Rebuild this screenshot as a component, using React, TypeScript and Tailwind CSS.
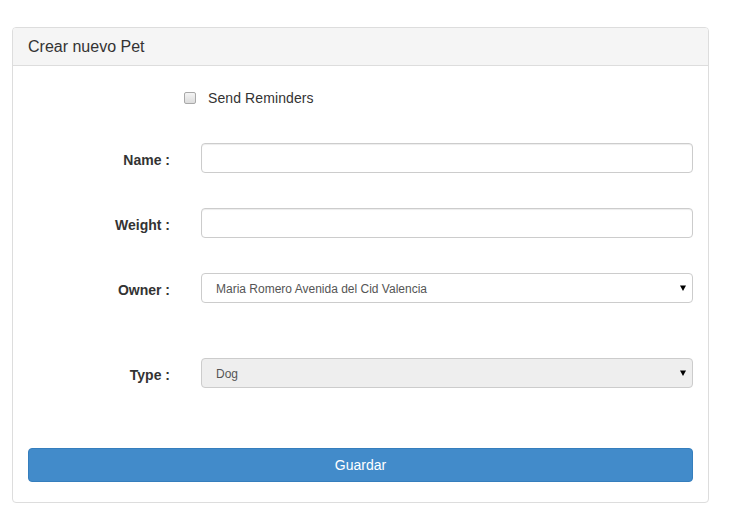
import React from 'react';

const font = { fontFamily: '"Liberation Sans", Arial, sans-serif' };

const Arrow = () => (
  <svg width="8" height="8" viewBox="0 0 8 8" className="absolute right-[6px] top-1/2 -translate-y-1/2 pointer-events-none">
    <path d="M1 1.5 L7 1.5 L4 7 Z" fill="#000" />
  </svg>
);

const Row = ({ label, children, className }: any) => (
  <div className={`flex items-center ${className}`}>
    <label className="w-[173px] pr-[31px] pt-[4px] text-right text-[14px] font-bold text-[#333]">{label}</label>
    <div className="flex-1">{children}</div>
  </div>
);

const App = () => {
  return (
    <div className="min-h-screen w-full bg-white pt-[27px] pl-[12px]" style={font}>
      <div className="w-[697px] border border-[#ddd] rounded-[4px] bg-white">
        {/* header */}
        <div className="h-[38px] bg-[#f5f5f5] border-b border-[#ddd] rounded-t-[3px] flex items-center px-[15px]">
          <h3 className="text-[16px] text-[#333]">Crear nuevo Pet</h3>
        </div>

        {/* body */}
        <div className="px-[15px] pt-[25px] pb-[20px]">
          <div className="flex items-center h-[14px] pl-[156px]">
            <span className="w-[12px] h-[12px] rounded-[2px] border border-[#a9a9a9] bg-gradient-to-b from-[#f4f4f4] to-[#dcdcdc]"></span>
            <span className="ml-[12px] text-[14px] tracking-[0.1px] text-[#333]">Send Reminders</span>
          </div>

          <Row label="Name :" className="mt-[38px]">
            <input type="text" className="w-full h-[30px] border border-[#ccc] rounded-[4px] bg-white shadow-[inset_0_1px_1px_rgba(0,0,0,0.075)] outline-none" />
          </Row>

          <Row label="Weight :" className="mt-[35px]">
            <input type="text" className="w-full h-[30px] border border-[#ccc] rounded-[4px] bg-white shadow-[inset_0_1px_1px_rgba(0,0,0,0.075)] outline-none" />
          </Row>

          <Row label="Owner :" className="mt-[35px]">
            <div className="relative">
              <select className="appearance-none w-full h-[30px] border border-[#ccc] rounded-[4px] bg-white pl-[14px] pt-[1px] text-[12px] text-[#555] outline-none" style={font}>
                <option>Maria Romero Avenida del Cid Valencia</option>
              </select>
              <Arrow />
            </div>
          </Row>

          <Row label="Type :" className="mt-[55px]">
            <div className="relative">
              <select className="appearance-none w-full h-[30px] border border-[#ccc] rounded-[4px] bg-[#eee] pl-[14px] pt-[1px] text-[12px] text-[#555] outline-none" style={font}>
                <option>Dog</option>
              </select>
              <Arrow />
            </div>
          </Row>

          <button className="mt-[60px] w-full h-[34px] rounded-[4px] bg-[#428bca] border border-[#357ebd] text-white text-[14px]" style={font}>
            Guardar
          </button>
        </div>
      </div>
    </div>
  );
};

export default App;
